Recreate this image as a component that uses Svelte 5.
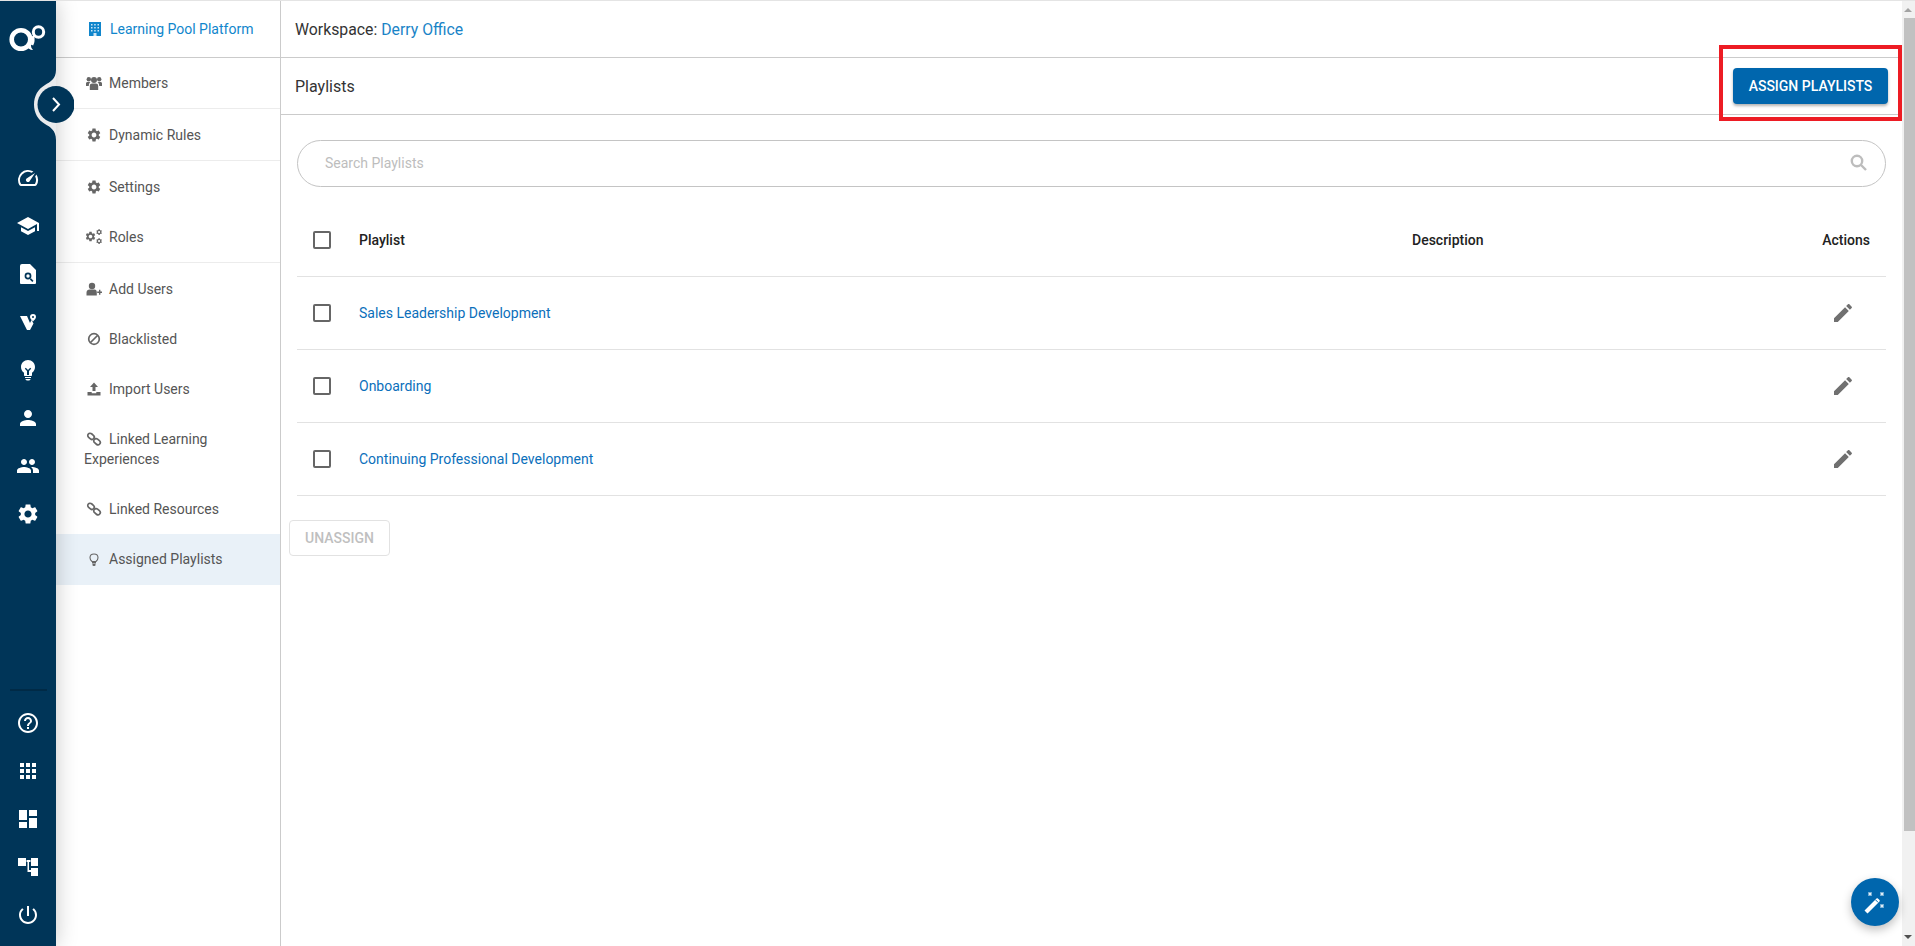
<script lang="ts">
  const gear = 'M19.14 12.94c.04-.3.06-.61.06-.94 0-.32-.02-.64-.07-.94l2.03-1.58c.18-.14.23-.41.12-.61l-1.92-3.32c-.12-.22-.37-.29-.59-.22l-2.39.96c-.5-.38-1.03-.7-1.62-.94l-.36-2.54c-.04-.24-.24-.41-.48-.41h-3.84c-.24 0-.43.17-.47.41l-.36 2.54c-.59.24-1.13.57-1.62.94l-2.39-.96c-.22-.08-.47 0-.59.22L2.74 8.87c-.12.21-.08.47.12.61l2.03 1.58c-.05.3-.09.63-.09.94s.02.64.07.94l-2.03 1.58c-.18.14-.23.41-.12.61l1.92 3.32c.12.22.37.29.59.22l2.39-.96c.5.38 1.03.7 1.62.94l.36 2.54c.05.24.24.41.48.41h3.84c.24 0 .44-.17.47-.41l.36-2.54c.59-.24 1.13-.56 1.62-.94l2.39.96c.22.08.47 0 .59-.22l1.92-3.32c.12-.22.07-.47-.12-.61l-2.01-1.58zM12 15.6c-1.98 0-3.6-1.62-3.6-3.6s1.62-3.6 3.6-3.6 3.6 1.62 3.6 3.6-1.62 3.6-3.6 3.6z';
  const pencil = 'M3 17.25V21h3.75L17.81 9.94l-3.75-3.75L3 17.25zM20.71 7.04c.39-.39.39-1.02 0-1.41l-2.34-2.34c-.39-.39-1.02-.39-1.41 0l-1.83 1.83 3.75 3.75 1.83-1.83z';

  const railTop = [
    'M20.38 8.57l-1.23 1.85a8 8 0 0 1-.22 7.58H5.07A8 8 0 0 1 15.58 6.85l1.85-1.23A10 10 0 0 0 3.35 19a2 2 0 0 0 1.72 1h13.85a2 2 0 0 0 1.74-1 10 10 0 0 0-.27-10.44zm-9.79 6.84a2 2 0 0 0 2.83 0l5.66-8.49-8.49 5.66a2 2 0 0 0 0 2.83z',
    'M5 13.18v4L12 21l7-3.82v-4L12 17l-7-3.82zM12 3L1 9l11 6 9-4.91V17h2V9L12 3z',
    'M6 2h8l6 6v13a1 1 0 0 1-1 1H5a1 1 0 0 1-1-1V4a2 2 0 0 1 2-2zM12 10.600a3.400 3.400 0 1 0 0 6.800 3.400 3.400 0 0 0 0-6.800zM12 12.300a1.700 1.700 0 1 1 0 3.400 1.700 1.700 0 0 1 0-3.400zM15 16.300l2.500 2.500-1.200 1.200-2.500-2.500z',
    'M4 6h7l3 7 1.500-3 2 3.500L14 20h-3zM17 4a3 3 0 0 1 3 3c0 1.200-1.500 3-3 4.500C15.500 10 14 8.200 14 7a3 3 0 0 1 3-3zM17 6a1 1 0 1 0 0 2 1 1 0 0 0 0-2z',
    'M12 2C8.100 2 5 5.100 5 9c0 2.400 1.200 4.500 3 5.700V17c0 .6.4 1 1 1h6c.6 0 1-.4 1-1v-2.300c1.800-1.200 3-3.300 3-5.700 0-3.900-3.100-7-7-7zM11 17v-4L8.800 10.800l1-1L12 12l2.200-2.200 1 1L13 13v4zM9 19h6v1H9zM9.500 21h5c0 .6-.6 1.500-1.500 1.500h-2c-.9 0-1.500-.9-1.500-1.500z',
    'M12 12c2.21 0 4-1.79 4-4s-1.79-4-4-4-4 1.79-4 4 1.79 4 4 4zm0 2c-2.67 0-8 1.34-8 4v2h16v-2c0-2.66-5.33-4-8-4z',
    'M16 11c1.66 0 2.99-1.34 2.99-3S17.66 5 16 5c-1.66 0-3 1.34-3 3s1.34 3 3 3zm-8 0c1.66 0 2.99-1.34 2.99-3S9.66 5 8 5C6.34 5 5 6.34 5 8s1.34 3 3 3zm0 2c-2.33 0-7 1.17-7 3.5V19h14v-2.5c0-2.33-4.67-3.5-7-3.5zm8 0c-.29 0-.62.02-.97.05 1.16.84 1.97 1.97 1.97 3.45V19h6v-2.5c0-2.33-4.67-3.5-7-3.5z',
    gear
  ];

  const railBottom = [
    'M11 18h2v-2h-2v2zm1-16C6.48 2 2 6.48 2 12s4.48 10 10 10 10-4.48 10-10S17.52 2 12 2zm0 18c-4.41 0-8-3.59-8-8s3.59-8 8-8 8 3.59 8 8-3.59 8-8 8zm0-14c-2.21 0-4 1.79-4 4h2c0-1.1.9-2 2-2s2 .9 2 2c0 2-3 1.75-3 5h2c0-2.25 3-2.5 3-5 0-2.21-1.79-4-4-4z',
    'M4 4h4v4H4zM10 4h4v4h-4zM16 4h4v4h-4zM4 10h4v4H4zM10 10h4v4h-4zM16 10h4v4h-4zM4 16h4v4H4zM10 16h4v4h-4zM16 16h4v4h-4z',
    'M3 3h8v10H3zM13 3h8v6h-8zM3 15h8v6H3zM13 11h8v10h-8z',
    'M2 3h8v8H2zM15 3h7v8h-7zM15 13h7v8h-7zM10.500 5h4v2h-1.500v8h2v2h-3.500V7h-1z',
    'M13 3h-2v10h2V3zm4.83 2.17l-1.42 1.42A6.92 6.92 0 0 1 19 12c0 3.87-3.13 7-7 7A6.995 6.995 0 0 1 7.58 6.58L6.17 5.17A8.932 8.932 0 0 0 3 12c0 4.97 4.03 9 9 9s9-4.03 9-9c0-2.74-1.23-5.18-3.17-6.83z'
  ];

  const navItems = [
    { label: 'Members', icon: 'users', line: true },
    { label: 'Dynamic Rules', icon: 'cog', line: true, low: true },
    { label: 'Settings', icon: 'cog', low: true, slim: true },
    { label: 'Roles', icon: 'cogs', line: true },
    { label: 'Add Users', icon: 'userplus', low: true, slim: true },
    { label: 'Blacklisted', icon: 'ban', slim: true },
    { label: 'Import Users', icon: 'upload', slim: true },
    { label: 'Linked Learning Experiences', icon: 'link', slim: true },
    { label: 'Linked Resources', icon: 'link', slim: true },
    { label: 'Assigned Playlists', icon: 'bulb', active: true }
  ];

  const playlists = ['Sales Leadership Development', 'Onboarding', 'Continuing Professional Development'];
</script>

{#snippet glyph(name: string)}
  <svg class="glyph" viewBox="0 0 16 16" aria-hidden="true">
    {#if name === 'users'}
      <circle cx="8" cy="5" r="3" /><circle cx="2.800" cy="4.200" r="2.200" /><circle cx="13.200" cy="4.200" r="2.200" />
      <path d="M3.800 15v-4C3.800 9 5 8.400 6 8.400h4c1 0 2.200.6 2.200 2.600v4zM0 11V8.500C0 7.500.7 7 1.500 7H4.500C3.300 8 2.800 9.200 2.800 11zM16 11V8.500C16 7.500 15.300 7 14.500 7H11.500c1.200 1 1.700 2.200 1.700 4z" />
    {:else if name === 'cog'}
      <path transform="scale(.667)" d={gear} />
    {:else if name === 'cogs'}
      <path transform="translate(-1.500 1.500) scale(.5)" d={gear} />
      <path transform="translate(9.500 -.5) scale(.3)" d={gear} />
      <path transform="translate(9.500 8.500) scale(.3)" d={gear} />
    {:else if name === 'userplus'}
      <circle cx="6" cy="5" r="3.200" />
      <path d="M.5 14.500v-3C.5 9.500 2 8.500 3.500 8.500h5c1.500 0 2.300 1 2.300 3v3zM11.200 10.500h1.800V8.700h1.400v1.800H16v1.400h-1.600v1.800H13v-1.800h-1.800z" />
    {:else if name === 'ban'}
      <circle class="outline" cx="8" cy="8" r="5.300" /><path class="outline" d="M4.500 11.500l7-7" />
    {:else if name === 'upload'}
      <path d="M8 1.500l4 4.500H9.500v4h-3V6H4zM1.500 11h4.200v1.200h4.600V11h4.200v3.500h-13z" />
    {:else if name === 'link'}
      <rect class="outline" x="1.500" y="3" width="7" height="4.600" rx="2.300" transform="rotate(40 5 5.300)" />
      <rect class="outline" x="7.500" y="8.400" width="7" height="4.600" rx="2.300" transform="rotate(40 11 10.700)" />
    {:else if name === 'bulb'}
      <path class="outline thin" d="M6 10.500C4.800 9.600 4 8.400 4 6.800 4 4.600 5.800 3 8 3s4 1.600 4 3.800c0 1.600-.8 2.800-2 3.700z" />
      <path d="M6 11h4v1.500H6zM6.500 13h3v1.500L8.500 15h-1l-1-.5z" />
    {/if}
  </svg>
{/snippet}

<div class="page">
  <aside class="rail">
    <div class="logo">
      <svg viewBox="0 0 56 60" width="56" height="60" aria-hidden="true">
        <circle cx="21" cy="38.500" r="9.300" fill="none" stroke="#fff" stroke-width="4.600" />
        <path d="M26 45.500c3 2.500 5 4 7 3.500-1.500-1.500-2-3-2-5z" fill="#fff" />
        <path d="M33 35c.6 3 .6 6-1 9" fill="none" stroke="#fff" stroke-width="2.600" />
        <circle cx="38.500" cy="31" r="5.200" fill="none" stroke="#fff" stroke-width="3" />
      </svg>
    </div>

    <svg class="notch" viewBox="0 0 74 80" width="74" height="80" aria-hidden="true">
      <path d="M56 0C56 9 50 12 45 15 38 19 34 26 34 34.500S38 50 45 54C50 57 56 60 56 70Z" fill="#e9ebed" />
      <circle cx="56" cy="34.500" r="18.500" fill="#003558" />
      <path d="M53 28l6 6.500-6 6.500" fill="none" stroke="#fff" stroke-width="2" />
    </svg>

    <nav class="rail-group">
      {#each railTop as d}
        <svg class="rail-icon" viewBox="0 0 24 24" aria-hidden="true"><path {d} /></svg>
      {/each}
    </nav>

    <nav class="rail-group bottom">
      <div class="rail-rule"></div>
      {#each railBottom as d}
        <svg class="rail-icon" viewBox="0 0 24 24" aria-hidden="true"><path {d} /></svg>
      {/each}
    </nav>
  </aside>

  <aside class="side">
    <div class="side-head">
      <svg class="building" viewBox="0 0 12 14" aria-hidden="true">
        <path d="M0 0h12v14H0z" fill="#1086cc" />
        <path d="M2 2h1.500v1.500H2zM5.200 2h1.500v1.500H5.200zM8.500 2H10v1.500H8.500zM2 5h1.500v1.500H2zM5.200 5h1.500v1.500H5.200zM8.500 5H10v1.500H8.500zM2 8h1.500v1.500H2zM5.200 8h1.500v1.500H5.200zM8.500 8H10v1.500H8.500zM4.500 11h3v3h-3z" fill="#cfe6f5" />
      </svg>
      <span>Learning Pool Platform</span>
    </div>
    {#each navItems as item}
      <div class="nav-row" class:line={item.line} class:slim={item.slim} class:low={item.low} class:active={item.active}>
        {@render glyph(item.icon)}{item.label}
      </div>
    {/each}
  </aside>

  <main class="main">
    <div class="bar workspace">
      <span>Workspace: <a href="#top" class="ws-link">Derry Office</a></span>
    </div>
    <div class="bar">
      <span>Playlists</span>
      <button class="assign">ASSIGN PLAYLISTS</button>
    </div>

    <div class="content">
      <div class="search">
        <span>Search Playlists</span>
        <svg viewBox="0 0 18 18" aria-hidden="true">
          <circle cx="7" cy="7" r="5.200" />
          <path d="M11 11l5 5" />
        </svg>
      </div>

      <div class="tr head">
        <span class="check"></span>
        <span>Playlist</span>
        <span>Description</span>
        <span class="right">Actions</span>
      </div>
      {#each playlists as name}
        <div class="tr">
          <span class="check"></span>
          <a href="#top" class="pl-link">{name}</a>
          <span></span>
          <span class="right">
            <svg class="edit" viewBox="0 0 24 24" aria-hidden="true"><path d={pencil} /></svg>
          </span>
        </div>
      {/each}

      <button class="unassign" disabled>UNASSIGN</button>
    </div>

    <div class="highlight"></div>
    <div class="fab">
      <svg viewBox="0 0 24 24" width="24" height="24" aria-hidden="true">
        <path d="M1.500 20.500L13.500 8.500c.4-.4 1-.4 1.400 0l1.600 1.600c.4.400.4 1 0 1.400L4.500 23.500z" fill="#fff" />
        <path d="M12.500 9.800l2.700 2.700" stroke="#0066ad" stroke-width="1" />
        <path d="M5.500 2.500l3 3M8.500 2.500l-3 3M17.500 2.500l3 3M20.500 2.500l-3 3M17.500 14.500l3 3M20.500 14.500l-3 3" stroke="#e3eff7" stroke-width="1.500" />
      </svg>
    </div>
  </main>

  <div class="scrollbar">
    <span class="arrow up"></span>
    <span class="thumb"></span>
    <span class="arrow down"></span>
  </div>
</div>

<style>
:global(body) {
  margin: 0;
  overflow: hidden;
  background: #fff;
}

.page {
  display: flex;
  height: 945px;
  border-top: 1px solid #e4e4e4;
  font-family: Roboto, 'Liberation Sans', sans-serif;
  font-size: 14px;
  color: #555;
  overflow: hidden;
}

.rail {
  position: relative;
  z-index: 2;
  display: flex;
  flex-direction: column;
  flex: 0 0 56px;
  background: #003558;
  box-shadow: 0 0 22px rgba(0, 0, 0, 0.22);
}

.logo {
  height: 153px;
}

.logo svg {
  display: block;
}

.notch {
  position: absolute;
  top: 69px;
  left: 0;
}

.rail-group {
  display: flex;
  flex-direction: column;
  align-items: center;
}

.rail-group.bottom {
  margin-top: auto;
  padding-bottom: 7px;
}

.rail-rule {
  width: 37px;
  height: 2px;
  background: #002a46;
  margin-bottom: 8px;
}

.rail-icon {
  width: 24px;
  height: 24px;
  padding: 12px;
  flex-shrink: 0;
  fill: #fff;
  fill-rule: evenodd;
}

.side {
  flex: 0 0 224px;
  border-right: 1px solid #cbcbcb;
}

.side-head {
  display: flex;
  align-items: center;
  height: 56px;
  padding-left: 33px;
  border-bottom: 1px solid #cbcbcb;
  color: #1086cc;
}

.building {
  width: 12px;
  height: 14px;
  margin-right: 9px;
}

.nav-row {
  padding: 15px 20px 15px 28px;
  line-height: 20px;
  border-bottom: 1px solid transparent;
}

.nav-row.line {
  border-bottom-color: #ececec;
}

.nav-row.low {
  padding-top: 16px;
}

.nav-row.slim {
  border-bottom: 0;
}

.nav-row.active {
  background: #e9f1f8;
}

.glyph {
  width: 16px;
  height: 16px;
  margin-right: 7px;
  margin-left: 2px;
  vertical-align: -3px;
  fill: #666;
}

.outline {
  fill: none;
  stroke: #666;
  stroke-width: 1.7;
}

.outline.thin {
  stroke-width: 1.1;
}

.main {
  position: relative;
  flex: 1;
  min-width: 0;
  display: flex;
  flex-direction: column;
}

.bar {
  display: flex;
  align-items: center;
  justify-content: space-between;
  height: 56px;
  padding: 0 14px;
  border-bottom: 1px solid #cbcbcb;
  font-size: 16px;
  color: #333;
}

.bar.workspace {
  font-size: 15.8px;
}

.ws-link {
  color: #1a84c7;
  text-decoration: none;
}

.assign {
  width: 155px;
  height: 36px;
  border: 0;
  border-radius: 4px;
  background: #0066ad;
  color: #fff;
  font: 500 14px Roboto, 'Liberation Sans', sans-serif;
  box-shadow: 0 2px 3px rgba(0, 0, 0, 0.3);
}

.content {
  padding: 25px 16px 0;
}

.search {
  display: flex;
  align-items: center;
  justify-content: space-between;
  height: 44px;
  padding: 0 17px 1px 27px;
  border: 1px solid #c4c4c4;
  border-radius: 24px;
  color: #bdbdbd;
  margin-bottom: 16px;
}

.search svg {
  width: 18px;
  height: 18px;
  fill: none;
  stroke: #bdbdbd;
  stroke-width: 2.4;
}

.tr {
  display: grid;
  grid-template-columns: 46px 1fr 358px 100px;
  align-items: center;
  height: 72px;
  padding: 0 16px;
  border-bottom: 1px solid #e2e2e2;
}

.tr.head {
  height: 73px;
  font-weight: 500;
  color: #222;
}

.check {
  width: 14px;
  height: 14px;
  border: 2px solid #666;
  border-radius: 2px;
}

.pl-link {
  color: #0b6fbb;
  text-decoration: none;
}

.right {
  display: flex;
  justify-content: flex-end;
}

.edit {
  width: 24px;
  height: 24px;
  margin-right: 15px;
  fill: #707070;
}

.unassign {
  display: block;
  width: 101px;
  height: 36px;
  margin: 24px 0 0 -8px;
  border: 1px solid #e2e2e2;
  border-radius: 4px;
  background: #fff;
  color: #bfbfbf;
  font: 500 14px Roboto, 'Liberation Sans', sans-serif;
}

.highlight {
  position: absolute;
  top: 44px;
  left: 1438px;
  width: 175px;
  height: 68px;
  border: 4px solid #ed1c24;
  pointer-events: none;
}

.fab {
  position: absolute;
  left: 1570px;
  top: 877px;
  width: 48px;
  height: 48px;
  border-radius: 50%;
  background: #0066ad;
  display: flex;
  align-items: center;
  justify-content: center;
  box-shadow: 0 4px 10px rgba(0, 0, 0, 0.25);
}

.scrollbar {
  flex: 0 0 13px;
  display: flex;
  flex-direction: column;
  align-items: flex-end;
  background: #f1f1f1;
}

.thumb {
  width: 11px;
  height: 813px;
  background: #c1c1c1;
}

.arrow {
  width: 0;
  height: 0;
  margin-right: 3px;
  border-left: 4px solid transparent;
  border-right: 4px solid transparent;
}

.arrow.up {
  margin-top: 7px;
  margin-bottom: 6px;
  border-bottom: 4px solid #a3a3a3;
}

.arrow.down {
  margin-top: auto;
  margin-bottom: 7px;
  border-top: 4px solid #505050;
}
</style>
